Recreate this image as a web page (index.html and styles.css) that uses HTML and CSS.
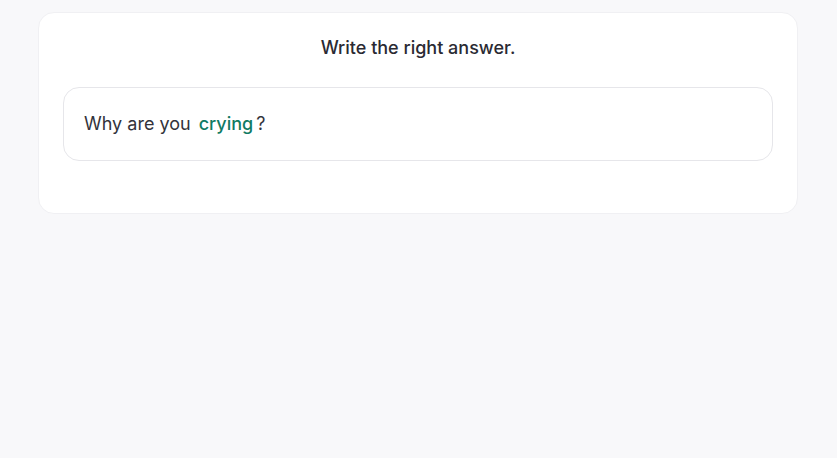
FILE: index.html
```html
<!DOCTYPE html>
<html>
<head>
<meta charset="utf-8">
<link rel="stylesheet" href="styles.css">
</head>
<body>
<div class="page">
  <div class="card">
    <h1 class="title">Write the right answer.</h1>
    <div class="question">
      <span class="word">Why are you</span>
      <span class="answer">crying</span>
      <span class="word">?</span>
    </div>
  </div>
</div>
</body>
</html>
```

FILE: styles.css
```css
html, body {
  margin: 0;
  padding: 0;
  background: #f8f8fa;
  font-family: Inter, "Noto Sans", sans-serif;
  color: #2b2b33;
}
.page {
  padding: 12px 0 0 38px;
}
.card {
  width: 760px;
  box-sizing: border-box;
  height: 202px;
  background: #ffffff;
  border: 1px solid #f0f0f3;
  border-radius: 16px;
  padding: 24px 24px 0 24px;
}
.title {
  margin: 0;
  text-align: center;
  font-size: 18px;
  font-weight: 500;
  line-height: 22px;
  color: #2a2a33;
}
.question {
  margin-top: 28px;
  height: 74px;
  box-sizing: border-box;
  border: 1px solid #e6e6ea;
  border-radius: 16px;
  padding: 0 20px 2px 20px;
  display: flex;
  align-items: center;
  gap: 8px;
  font-size: 18px;
  font-weight: 400;
  color: #33333b;
}
.answer {
  color: #107b63;
  font-weight: 500;
}
.answer + .word {
  margin-left: -5px;
}
```
